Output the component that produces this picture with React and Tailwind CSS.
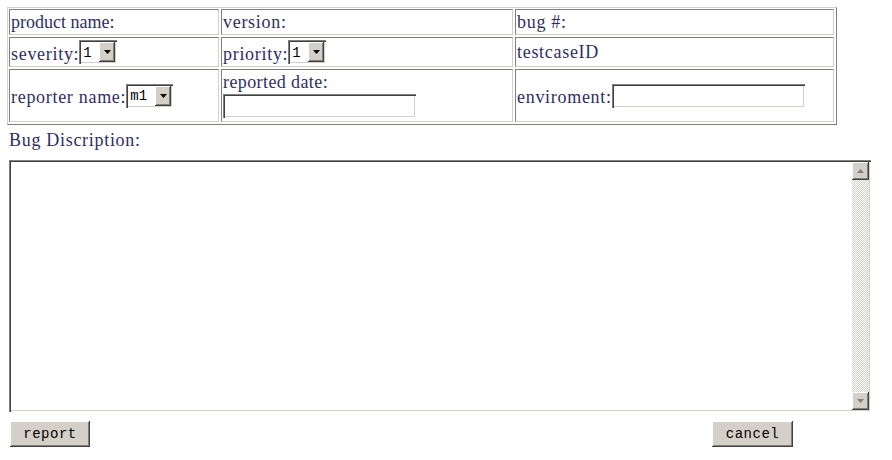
import React from "react";

const serif = { fontFamily: '"Liberation Serif", "Times New Roman", serif' };

// sunken field edge (classic windows look)
const sunken =
  "shadow-[inset_1px_1px_#808080,inset_2px_2px_#404040,inset_-1px_-1px_#ffffff,inset_-2px_-2px_#d4d0c8]";
const raised =
  "shadow-[inset_-1px_-1px_#404040,inset_1px_1px_#ffffff,inset_-2px_-2px_#808080,inset_2px_2px_#d4d0c8]";

function Arrow({ up = false, color = "#000" }) {
  return (
    <svg width="7" height="4" viewBox="0 0 7 4" className="block">
      {up ? (
        <path d="M3.5 0 L7 4 L0 4 Z" fill={color} />
      ) : (
        <path d="M0 0 L7 0 L3.5 4 Z" fill={color} />
      )}
    </svg>
  );
}

function FakeSelect({ value, width }) {
  return (
    <div className={`flex h-[24px] p-[2px] bg-white ${sunken}`} style={{ width }}>
      <div className="flex-1 flex items-center pl-[2px] pt-px font-['Liberation_Mono',monospace] text-[14px] text-black leading-none">
        {value}
      </div>
      <div className={`w-[16px] h-full bg-[#d4d0c8] flex items-center justify-center ${raised}`}>
        <Arrow />
      </div>
    </div>
  );
}

function Field({ width }) {
  return <div className={`h-[24px] bg-white ${sunken}`} style={{ width }} />;
}

function Cell({ children, className = "" }) {
  return (
    <div
      className={`border border-t-[#808080] border-l-[#808080] border-r-[#d4d0c8] border-b-[#d4d0c8] p-px ${className}`}
    >
      {children}
    </div>
  );
}

function Btn({ label, width }) {
  return (
    <button
      className={`h-[26px] bg-[#d4d0c8] ${raised} font-['Liberation_Mono',monospace] text-[14px] tracking-[0.5px] text-black leading-none flex items-center justify-center`}
      style={{ width }}
    >
      {label}
    </button>
  );
}

export default function App() {
  return (
    <div className="w-[892px] h-[460px] bg-white text-[#2e2e66] text-[18px]" style={serif}>
      <div className="pt-[7px] pl-[7px]">
        {/* info table */}
        <div className="w-[830px] grid grid-cols-[210px_292px_319px] grid-rows-[26px_30px_53px] gap-[2px] pt-px pl-px pr-[2px] pb-[2px] border border-t-[#d4d0c8] border-l-[#d4d0c8] border-r-[#808080] border-b-[#808080]">
          <Cell className="flex items-center leading-[22px]">product name:</Cell>
          <Cell className="flex items-center leading-[22px] tracking-[0.7px]">version:</Cell>
          <Cell className="flex items-center leading-[22px] tracking-[0.7px]">bug #:</Cell>

          <Cell className="flex items-center leading-[22px]">
            <span className="pt-[3px] tracking-[0.7px]">severity:</span>
            <FakeSelect value="1" width={38} />
          </Cell>
          <Cell className="flex items-center leading-[22px]">
            <span className="pt-[3px] tracking-[0.7px]">priority:</span>
            <FakeSelect value="1" width={38} />
          </Cell>
          <Cell className="flex items-center leading-[22px] tracking-[0.7px]">testcaseID</Cell>

          <Cell className="flex items-center leading-[22px]">
            <span className="pt-[3px] tracking-[0.7px]">reporter name:</span>
            <FakeSelect value="m1" width={47} />
          </Cell>
          <Cell className="flex flex-col">
            <span className="leading-[23px] tracking-[0.4px]">reported date:</span>
            <Field width={193} />
          </Cell>
          <Cell className="flex items-center leading-[22px]">
            <span className="pt-[3px] tracking-[0.7px]">enviroment:</span>
            <Field width={193} />
          </Cell>
        </div>
      </div>

      <div className="pl-[9px]">
        <div className="mt-[4px] leading-[22px] tracking-[0.7px]">Bug Discription:</div>

        {/* description box with scrollbar */}
        <div className={`mt-[9px] w-[862px] h-[252px] p-[2px] flex bg-white ${sunken}`}>
          <div className="flex-1" />
          <div className="w-[17px] h-full flex flex-col bg-[image:repeating-conic-gradient(#d4d0c8_0_25%,#ffffff_0_50%)] bg-[length:2px_2px]">
            <div className={`h-[18px] bg-[#d4d0c8] flex items-center justify-center ${raised}`}>
              <Arrow up color="#808080" />
            </div>
            <div className="flex-1" />
            <div className={`h-[18px] bg-[#d4d0c8] flex items-center justify-center ${raised}`}>
              <Arrow color="#808080" />
            </div>
          </div>
        </div>

        <div className="mt-[9px] w-[784px] flex justify-between pl-px">
          <Btn label="report" width={80} />
          <Btn label="cancel" width={81} />
        </div>
      </div>
    </div>
  );
}
